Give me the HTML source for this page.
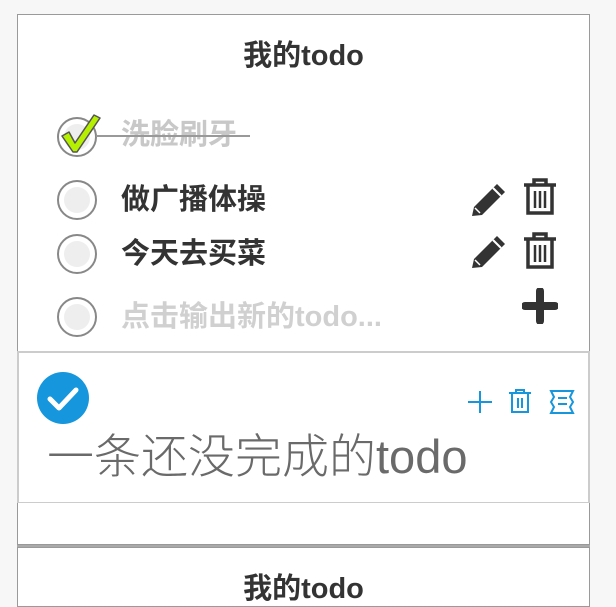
<!DOCTYPE html>
<html><head><meta charset="utf-8"><style>
*{margin:0;padding:0;box-sizing:border-box}
body{width:616px;height:590px;background:#f7f7f7;position:relative;overflow:hidden;font-family:"Liberation Sans","Noto Sans CJK SC",sans-serif}
.a{position:absolute}
.card{position:absolute;left:17px;width:573px;background:#fff;border:1px solid #9a9a9a}
.title{position:absolute;left:0;width:100%;text-align:center;font-weight:bold;font-size:29px;color:#333;line-height:34px}
.circ{position:absolute;width:40px;height:40px;border-radius:50%;border:2px solid #888;background:#fff}
.circ::after{content:"";position:absolute;left:5px;top:5px;width:26px;height:26px;border-radius:50%;background:#eee}
.t{position:absolute;left:121px;font-size:29px;font-weight:bold;color:#333;line-height:32px;white-space:nowrap}
</style></head><body>
<div class="card" style="top:14px;height:340px;border-bottom:none">
 <div class="title" style="top:24px">我的todo</div>
</div>
<div class="circ" style="left:57px;top:117px"></div>
<svg class="a" style="left:56px;top:112px" width="46" height="44" viewBox="0 0 46 44"><path d="M6 24 L13 20 L19 31 L38 3 L44 6 L21 40 L17 40 Z" fill="#b5f000" stroke="#555" stroke-width="1.5" stroke-linejoin="round"/></svg>
<div class="t" style="top:119px;color:#c8c8c8">洗脸刷牙</div>
<div class="a" style="left:96px;top:135px;width:154px;height:2px;background:#999"></div>
<div class="circ" style="left:57px;top:180px"></div>
<div class="t" style="top:184px">做广播体操</div>
<div class="circ" style="left:57px;top:234px"></div>
<div class="t" style="top:238px">今天去买菜</div>
<div class="circ" style="left:57px;top:297px"></div>
<div class="t" style="top:301px;color:#d0d0d0">点击输出新的todo...</div>
<svg class="a" style="left:470px;top:181px" width="38" height="36" viewBox="0 0 38 36"><path d="M2 35 L4 26 L27 3 L35 11 L12 34 Z" fill="#333"/><path d="M23 7 L31 15" stroke="#fff" stroke-width="2"/><path d="M5 27 L10 32" stroke="#fff" stroke-width="1.5"/></svg>
<svg class="a" style="left:470px;top:233px" width="38" height="36" viewBox="0 0 38 36"><path d="M2 35 L4 26 L27 3 L35 11 L12 34 Z" fill="#333"/><path d="M23 7 L31 15" stroke="#fff" stroke-width="2"/><path d="M5 27 L10 32" stroke="#fff" stroke-width="1.5"/></svg>
<svg class="a" style="left:522px;top:177px" width="36" height="40" viewBox="0 0 36 40"><g fill="none" stroke="#333" stroke-width="3.5"><path d="M2 8 H34"/><path d="M12 7 V3 H24 V7"/><path d="M6 9 V36 H30 V9"/><path d="M13 14 V31 M18 14 V31 M23 14 V31" stroke-width="2.5"/></g></svg>
<svg class="a" style="left:522px;top:231px" width="36" height="40" viewBox="0 0 36 40"><g fill="none" stroke="#333" stroke-width="3.5"><path d="M2 8 H34"/><path d="M12 7 V3 H24 V7"/><path d="M6 9 V36 H30 V9"/><path d="M13 14 V31 M18 14 V31 M23 14 V31" stroke-width="2.5"/></g></svg>
<svg class="a" style="left:522px;top:288px" width="36" height="36" viewBox="0 0 36 36"><path d="M18 3 V33 M3 18 H33" stroke="#333" stroke-width="8" stroke-linecap="round"/></svg>
<div class="a" style="left:17px;top:351px;width:573px;height:153px;background:#fff;border:2px solid #ccc"></div>
<svg class="a" style="left:37px;top:372px" width="54" height="54" viewBox="0 0 54 54"><circle cx="26" cy="26" r="26" fill="#1696dc"/><path d="M13 27 L22 36 L39 18" fill="none" stroke="#fff" stroke-width="5" stroke-linecap="round" stroke-linejoin="round"/></svg>
<svg class="a" style="left:466px;top:389px" width="28" height="26"><path d="M14 2 V24 M2 13 H26" stroke="#1696dc" stroke-width="2"/></svg>
<svg class="a" style="left:508px;top:388px" width="24" height="26"><g fill="none" stroke="#1696dc" stroke-width="2"><path d="M1 5 H23 M8 5 V2 H16 V5 M4 6 V24 H20 V6 M10 10 V20 M14 10 V20"/></g></svg>
<svg class="a" style="left:549px;top:389px" width="26" height="26"><g fill="none" stroke="#1696dc" stroke-width="2"><path d="M2 2 H24 L21 8 L24 13 L21 18 L24 24 H2 L5 18 L2 13 L5 8 Z M9 9 H18 M9 15 H18"/></g></svg>
<div class="a" style="left:47px;top:430px;font-size:47px;color:#6a6a6a;line-height:54px;white-space:nowrap;font-weight:300">一条还没完成的todo</div>
<div class="a" style="left:17px;top:503px;width:573px;height:42px;background:#fff;border:1px solid #999;border-top:none"></div>
<div class="a" style="left:17px;top:545px;width:573px;height:2px;background:#aaa"></div>
<div class="card" style="top:547px;height:60px">
 <div class="title" style="top:24px">我的todo</div>
</div>
</body></html>
